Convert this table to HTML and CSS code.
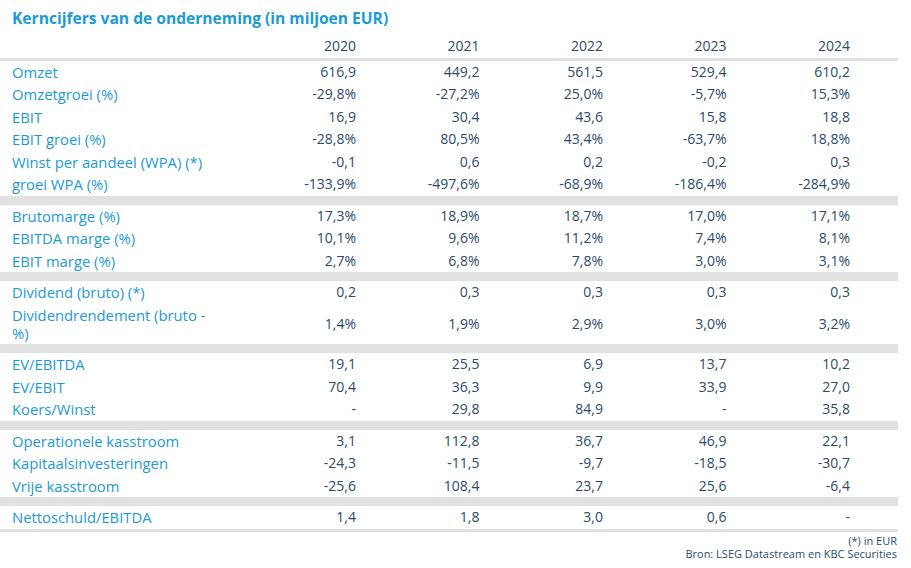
FILE: index.html
```html
<!DOCTYPE html>
<html lang="nl">
<head>
<meta charset="utf-8">
<title>Kerncijfers</title>
<link rel="stylesheet" href="styles.css">
</head>
<body>
<div class="sheet">
  <h1 class="title">Kerncijfers van de onderneming (in miljoen EUR)</h1>
  <div class="row head">
    <div class="lbl"></div><div class="v">2020</div><div class="v">2021</div><div class="v">2022</div><div class="v">2023</div><div class="v">2024</div>
  </div>
  <div class="line"></div>

  <div class="row"><div class="lbl">Omzet</div><div class="v">616,9</div><div class="v">449,2</div><div class="v">561,5</div><div class="v">529,4</div><div class="v">610,2</div></div>
  <div class="row"><div class="lbl">Omzetgroei (%)</div><div class="v">-29,8%</div><div class="v">-27,2%</div><div class="v">25,0%</div><div class="v">-5,7%</div><div class="v">15,3%</div></div>
  <div class="row"><div class="lbl">EBIT</div><div class="v">16,9</div><div class="v">30,4</div><div class="v">43,6</div><div class="v">15,8</div><div class="v">18,8</div></div>
  <div class="row"><div class="lbl">EBIT groei (%)</div><div class="v">-28,8%</div><div class="v">80,5%</div><div class="v">43,4%</div><div class="v">-63,7%</div><div class="v">18,8%</div></div>
  <div class="row"><div class="lbl">Winst per aandeel (WPA) (*)</div><div class="v">-0,1</div><div class="v">0,6</div><div class="v">0,2</div><div class="v">-0,2</div><div class="v">0,3</div></div>
  <div class="row"><div class="lbl">groei WPA (%)</div><div class="v">-133,9%</div><div class="v">-497,6%</div><div class="v">-68,9%</div><div class="v">-186,4%</div><div class="v">-284,9%</div></div>
  <div class="band"></div>

  <div class="row"><div class="lbl">Brutomarge (%)</div><div class="v">17,3%</div><div class="v">18,9%</div><div class="v">18,7%</div><div class="v">17,0%</div><div class="v">17,1%</div></div>
  <div class="row"><div class="lbl">EBITDA marge (%)</div><div class="v">10,1%</div><div class="v">9,6%</div><div class="v">11,2%</div><div class="v">7,4%</div><div class="v">8,1%</div></div>
  <div class="row"><div class="lbl">EBIT marge (%)</div><div class="v">2,7%</div><div class="v">6,8%</div><div class="v">7,8%</div><div class="v">3,0%</div><div class="v">3,1%</div></div>
  <div class="band"></div>

  <div class="row"><div class="lbl">Dividend (bruto) (*)</div><div class="v">0,2</div><div class="v">0,3</div><div class="v">0,3</div><div class="v">0,3</div><div class="v">0,3</div></div>
  <div class="row"><div class="lbl">Dividendrendement (bruto - %)</div><div class="v">1,4%</div><div class="v">1,9%</div><div class="v">2,9%</div><div class="v">3,0%</div><div class="v">3,2%</div></div>
  <div class="band"></div>

  <div class="row"><div class="lbl">EV/EBITDA</div><div class="v">19,1</div><div class="v">25,5</div><div class="v">6,9</div><div class="v">13,7</div><div class="v">10,2</div></div>
  <div class="row"><div class="lbl">EV/EBIT</div><div class="v">70,4</div><div class="v">36,3</div><div class="v">9,9</div><div class="v">33,9</div><div class="v">27,0</div></div>
  <div class="row"><div class="lbl">Koers/Winst</div><div class="v">-</div><div class="v">29,8</div><div class="v">84,9</div><div class="v">-</div><div class="v">35,8</div></div>
  <div class="band"></div>

  <div class="row"><div class="lbl">Operationele kasstroom</div><div class="v">3,1</div><div class="v">112,8</div><div class="v">36,7</div><div class="v">46,9</div><div class="v">22,1</div></div>
  <div class="row"><div class="lbl">Kapitaalsinvesteringen</div><div class="v">-24,3</div><div class="v">-11,5</div><div class="v">-9,7</div><div class="v">-18,5</div><div class="v">-30,7</div></div>
  <div class="row"><div class="lbl">Vrije kasstroom</div><div class="v">-25,6</div><div class="v">108,4</div><div class="v">23,7</div><div class="v">25,6</div><div class="v">-6,4</div></div>
  <div class="band"></div>

  <div class="row"><div class="lbl">Nettoschuld/EBITDA</div><div class="v">1,4</div><div class="v">1,8</div><div class="v">3,0</div><div class="v">0,6</div><div class="v">-</div></div>
  <div class="line"></div>

  <div class="foot">
    <div>(*) in EUR</div>
    <div>Bron: LSEG Datastream en KBC Securities</div>
  </div>
</div>
</body>
</html>
```

FILE: styles.css
```css
html, body {
  margin: 0;
  padding: 0;
  background: #ffffff;
}
body {
  font-family: "Open Sans", "Noto Sans", "Liberation Sans", sans-serif;
  color: #2b4a6d;
}
.sheet {
  width: 898px;
}
.title {
  margin: 0;
  padding: 8px 12px 0;
  font-size: 15.6px;
  line-height: 20px;
  font-weight: 700;
  color: #1b9ad6;
}
.row {
  display: grid;
  grid-template-columns: 232.5px repeat(5, 123.5px);
  padding: 2.25px 0;
  font-size: 14px;
  line-height: 18px;
}
.head {
  margin-top: 7px;
}
.lbl {
  padding: 0 12px;
  font-size: 14.8px;
  color: #1b9ad6;
}
.v {
  text-align: right;
  align-self: center;
  color: #2b4a6d;
}
.band {
  height: 9px;
  background: #e1e1e1;
}
.line {
  height: 3px;
  background: #e1e1e1;
}
.foot {
  margin-top: 2px;
  padding-right: 1px;
  text-align: right;
  font-size: 11px;
  line-height: 13px;
  color: #2b4a6d;
}
```
